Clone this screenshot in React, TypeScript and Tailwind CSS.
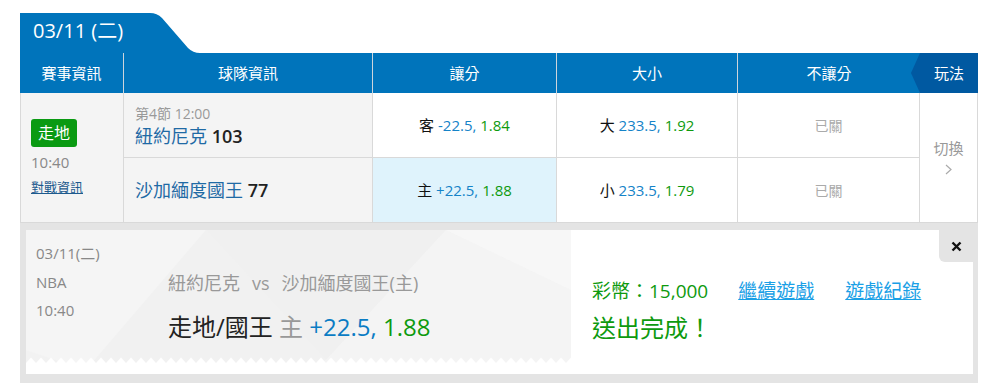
import React from 'react';

const Odds = ({ tag, line, price }: { tag: string; line: string; price: string }) => (
  <span className="text-[15px]">
    <span className="text-[#111]">{tag}</span>{' '}
    <span className="text-[#1583c8]">{line}, </span>
    <span className="text-[#0e9a0e]">{price}</span>
  </span>
);

const App = () => {
  return (
    <div className="w-[985px] h-[385px] bg-white overflow-hidden pt-[13px] pl-[20px] font-['Open_Sans','Noto_Sans_CJK_TC',sans-serif]">
      <div className="w-[958px]">
        {/* date tab */}
        <div className="relative h-[40px] w-[180px]">
          <svg className="absolute inset-0" width="180" height="40" viewBox="0 0 180 40">
            <path d="M0 40 V0 H130 Q137 0 142 5 L168 35 Q173 40 180 40 Z" fill="#0074bb" />
          </svg>
          <div className="relative flex h-full items-center pb-[4px] pl-[13px] text-[20px] text-white">03/11 (二)</div>
        </div>

        {/* header */}
        <div className="grid h-[40px] grid-cols-[104px_249px_184px_181px_182px_58px] bg-[#0074bb] text-[15px] text-white">
          <div className="flex items-center justify-center border-r border-[#cdd5dc]">賽事資訊</div>
          <div className="flex items-center justify-center border-r border-[#cdd5dc]">球隊資訊</div>
          <div className="flex items-center justify-center border-r border-[#cdd5dc]">讓分</div>
          <div className="flex items-center justify-center border-r border-[#cdd5dc]">大小</div>
          <div className="flex items-center justify-center">不讓分</div>
          <div className="relative flex items-center justify-center bg-[#0059a1]">
            <svg className="absolute left-[-9px] top-0" width="9" height="40" viewBox="0 0 9 40">
              <polygon points="9,0 0,20 9,40" fill="#0059a1" />
            </svg>
            玩法
          </div>
        </div>

        {/* body */}
        <div className="grid grid-cols-[104px_249px_184px_181px_182px_58px] grid-rows-[65px_65px] text-[#333]">
          <div className="row-span-2 flex flex-col items-start justify-center border-b border-l border-r border-[#d9d9d9] bg-[#f4f4f4] pl-[10px]">
            <span className="flex h-[28px] w-[46px] items-center justify-center rounded-[3px] bg-[#0a9a12] text-[16px] text-white">走地</span>
            <span className="mt-[5px] text-[15px] leading-[20px] text-[#888]">10:40</span>
            <a className="mt-[6px] text-[13px] leading-[18px] text-[#1d5a8e] underline">對戰資訊</a>
          </div>
          <div className="flex flex-col border-b border-r border-[#d9d9d9] bg-[#f4f4f4] pl-[11px] pt-[11px]">
            <span className="text-[14px] leading-[20px] text-[#999]">第4節 12:00</span>
            <span className="text-[18px] leading-[24px] text-[#1f6aa5]">
              紐約尼克 <span className="font-semibold text-[#222]">103</span>
            </span>
          </div>
          <div className="flex items-center justify-center border-b border-r border-[#d9d9d9] bg-white">
            <Odds tag="客" line="-22.5" price="1.84" />
          </div>
          <div className="flex items-center justify-center border-b border-r border-[#d9d9d9] bg-white">
            <Odds tag="大" line="233.5" price="1.92" />
          </div>
          <div className="flex items-center justify-center border-b border-r border-[#d9d9d9] bg-white text-[14px] text-[#aaa]">已關</div>
          <div className="row-span-2 flex flex-col items-center justify-center border-b border-r border-[#d9d9d9] bg-white pb-[2px] text-[15px] text-[#999]">
            <span className="leading-[20px]">切換</span>
            <svg className="mt-[6px]" width="7" height="11" viewBox="0 0 7 11">
              <path d="M1 1 L6 5.5 L1 10" fill="none" stroke="#aaa" strokeWidth="1.2" />
            </svg>
          </div>
          <div className="flex items-center border-b border-r border-[#d9d9d9] bg-[#f4f4f4] pl-[11px] text-[18px] text-[#1f6aa5]">
            沙加緬度國王&nbsp;<span className="font-semibold text-[#222]">77</span>
          </div>
          <div className="flex items-center justify-center border-b border-r border-[#d9d9d9] bg-[#dff3fc]">
            <Odds tag="主" line="+22.5" price="1.88" />
          </div>
          <div className="flex items-center justify-center border-b border-r border-[#d9d9d9] bg-white">
            <Odds tag="小" line="233.5" price="1.79" />
          </div>
          <div className="flex items-center justify-center border-b border-r border-[#d9d9d9] bg-white text-[14px] text-[#aaa]">已關</div>
        </div>

        {/* bet confirmation */}
        <div className="h-[160px] bg-[#e4e4e4] pb-[9px] pl-[6px] pr-[5px] pt-[7px]">
          <div className="relative flex h-[144px] bg-white">
            <div className="relative h-full w-[545px] overflow-hidden bg-[#f2f2f2]">
              <svg className="absolute inset-0" width="545" height="144" viewBox="0 0 545 144">
                <polygon points="0,0 180,0 60,140 0,120" fill="#f5f5f5" />
                <polygon points="180,0 420,0 300,130" fill="#f0f0f0" />
                <polygon points="300,130 420,0 545,60 545,144 260,144" fill="#f4f4f4" />
                <polygon points="420,0 545,0 545,60" fill="#f7f7f7" />
                <polygon points="60,140 180,0 300,130 260,144 40,144" fill="#f1f1f1" />
              </svg>
              <svg className="absolute bottom-0 left-0" width="545" height="17" viewBox="0 0 545 17">
                <defs>
                  <pattern id="zig" width="10" height="6" patternUnits="userSpaceOnUse">
                    <polygon points="0,6 5,0.5 10,6" fill="#ffffff" />
                  </pattern>
                </defs>
                <rect x="0" y="0" width="545" height="6" fill="url(#zig)" />
                <rect x="0" y="6" width="545" height="11" fill="#ffffff" />
              </svg>
              <div className="relative flex">
                <div className="flex w-[142px] flex-col pl-[10px] pt-[9px] text-[15px] leading-[28.5px] text-[#888]">
                  <span>03/11(二)</span>
                  <span>NBA</span>
                  <span>10:40</span>
                </div>
                <div className="flex flex-col pt-[40px]">
                  <span className="text-[18px] leading-[26px] text-[#999]">
                    紐約尼克<span className="mx-[12px]">vs</span>沙加緬度國王(主)
                  </span>
                  <span className="mt-[15px] text-[24px] leading-[32px]">
                    <span className="text-[#222]">走地/國王</span>{' '}
                    <span className="text-[#999]">主</span>{' '}
                    <span className="text-[#0a7cc4]">+22.5, </span>
                    <span className="text-[#0e9a0e]">1.88</span>
                  </span>
                </div>
              </div>
            </div>
            <div className="flex flex-col pl-[21px] pt-[47px]">
              <div className="flex text-[19px] leading-[28px]">
                <span className="text-[#0e9a0e]">彩幣：15,000</span>
                <a className="ml-[30px] text-[#1aa0e6] underline">繼續遊戲</a>
                <a className="ml-[31px] text-[#1aa0e6] underline">遊戲紀錄</a>
              </div>
              <span className="mt-[7px] text-[24px] leading-[32px] text-[#0e9a0e]">送出完成！</span>
            </div>
            <div className="absolute right-0 top-0 flex h-[32px] w-[34px] items-center justify-center rounded-bl-[6px] bg-[#e4e4e4]">
              <svg width="11" height="11" viewBox="0 0 11 11">
                <path d="M1.5 1.5 L9.5 9.5 M9.5 1.5 L1.5 9.5" stroke="#111" strokeWidth="2.4" />
              </svg>
            </div>
          </div>
        </div>
      </div>
    </div>
  );
};

export default App;
